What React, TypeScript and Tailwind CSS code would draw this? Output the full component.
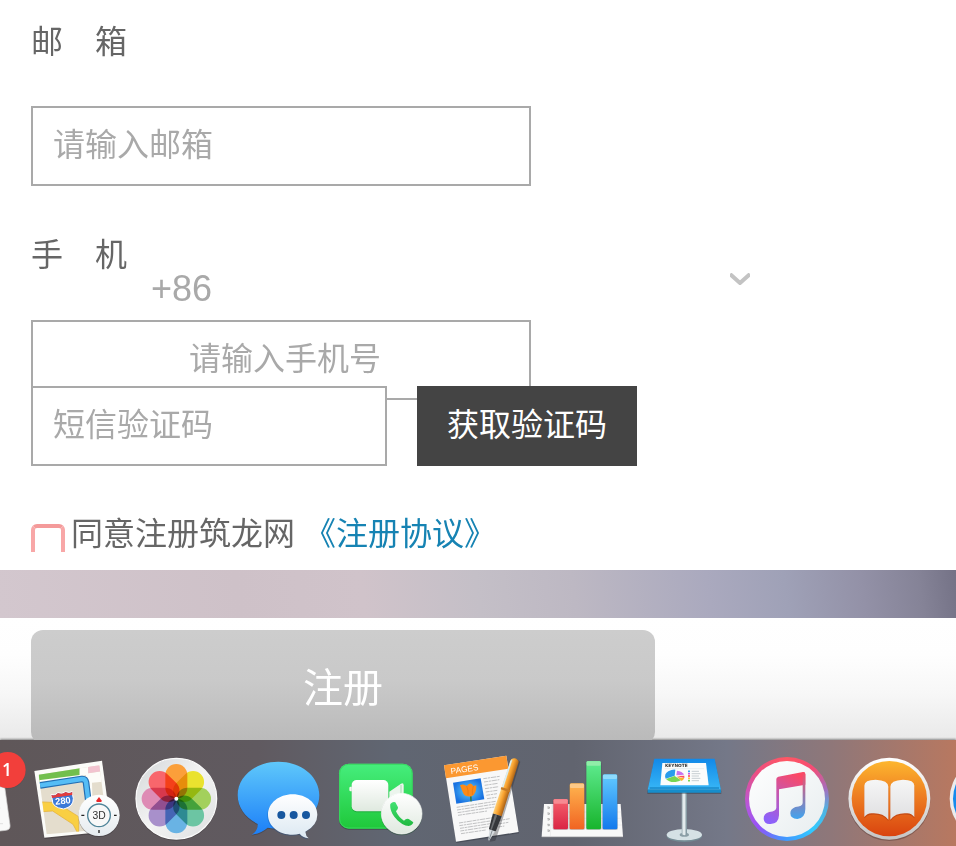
import type { ReactNode } from "react";

type DockIconProps = {
  label: string;
  viewBox: string;
  children: ReactNode;
};

function DockIcon({ label, viewBox, children }: DockIconProps) {
  return (
    <li className="flex justify-start">
      <svg viewBox={viewBox} className="h-[106px] w-[102px] shrink-0 overflow-visible" role="img" aria-label={label}>
        {children}
      </svg>
    </li>
  );
}

type FadeProps = {
  id: string;
  from: string;
  to: string;
};

function VerticalFade({ id, from, to }: FadeProps) {
  return (
    <linearGradient id={id} x1="0" y1="0" x2="0" y2="1">
      <stop offset="0" stopColor={from} />
      <stop offset="1" stopColor={to} />
    </linearGradient>
  );
}

const petals = [
  { angle: 0, color: "#fb9f3a" },
  { angle: 45, color: "#eae22f" },
  { angle: 90, color: "#a3d05c" },
  { angle: 135, color: "#6cc5a3" },
  { angle: 180, color: "#69b3e4" },
  { angle: 225, color: "#a890cb" },
  { angle: 270, color: "#de8bb5" },
  { angle: 315, color: "#f8666c" },
];

const bars = [
  { x: 372, y: 192, color: "url(#bar-red)", cap: "#f78a92" },
  { x: 421, y: 145, color: "url(#bar-orange)", cap: "#fdc987" },
  { x: 471, y: 78, color: "url(#bar-green)", cap: "#91eda9" },
  { x: 520, y: 118, color: "url(#bar-blue)", cap: "#8edbfd" },
];

const legend = ["#3aa3ee", "#c45fe8", "#ff4f67", "#ffc53a", "#75d554"];

function Dock() {
  return (
    <nav
      aria-label="Dock"
      className="overflow-hidden bg-[linear-gradient(90deg,#5f5759_0%,#605a60_27%,#606672_41%,#61646f_60%,#747888_76%,#8f7779_87%,#b87860_100%)] shadow-[0_-1px_2px_#888]"
    >
      <ul className="-ml-[76px] grid w-[1118px] grid-cols-11">
        <DockIcon label="Reminders" viewBox="-225 15 306 318">
          <path d="M-200 100H-2q12 0 13 12L33 270q2 14-12 16L-200 310z" fill="#f9f9f9" stroke="#cfcfcf" strokeWidth="2" />
          <path d="M-10 219h14M-8 266h20" stroke="#d4d4d4" strokeWidth="2" />
          <circle cx="26" cy="107" r="54" fill="#443d3f" opacity=".35" />
          <circle cx="26" cy="105" r="54" fill="#f23f3b" />
          <text x="24" y="123" textAnchor="middle" fontSize="52" fontWeight="600" fill="#fff" className="font-['Open_Sans',sans-serif]">1</text>
        </DockIcon>

        <DockIcon label="Maps" viewBox="80 15 306 318">
          <defs>
            <clipPath id="map-area">
              <path d="M118 119L300 91L325 282L142 298Z" />
            </clipPath>
            <VerticalFade id="compass" from="#ffffff" to="#e6ebef" />
          </defs>
          <path d="M105 109L308 78L337 289L135 309Z" fill="#352f31" opacity=".4" transform="translate(1 3)" />
          <path d="M105 108L308 77L337 288L135 308Z" fill="#fbfbf8" />
          <g clipPath="url(#map-area)">
            <path d="M110 80H330V300H110Z" fill="#e4ddcd" />
            <path d="M110 105L241 90V122L112 142Z" fill="#72bf4d" />
            <path d="M241 90L266 88V115L310 109V140L278 143L282 300L268 300L260 120L118 145V136L241 120Z" fill="#fdfcf8" />
            <path d="M266 80H310V108L267 115Z" fill="#f2c3cf" />
            <path d="M116 200L172 203L238 245V300L221 268L160 228L116 231Z" fill="#f9cf43" stroke="#e4ae31" strokeWidth="2" />
            <path d="M118 152L247 132Q258 131 260 142L268 205" fill="none" stroke="#246fb3" strokeWidth="20" />
            <path d="M118 152L247 132Q258 131 260 142L268 205" fill="none" stroke="#55bdf6" strokeWidth="13" />
          </g>
          <path d="M155 179Q168 183 176 173Q188 179 199 170Q211 176 219 169Q219 181 222 190Q223 215 193 222Q157 217 159 194Z" fill="#3b79d8" stroke="#fff" strokeWidth="3" />
          <path d="M156 180Q168 184 176 174Q188 180 199 171Q211 177 219 170V180L158 189Z" fill="#e33d3d" />
          <text x="191" y="207" textAnchor="middle" fontSize="28" fontWeight="700" fill="#fff" transform="rotate(-6 191 200)" className="font-['Liberation_Sans',sans-serif]">280</text>
          <circle cx="299" cy="244" r="62" fill="#2d282c" opacity=".4" />
          <circle cx="299" cy="241" r="62" fill="url(#compass)" />
          <circle cx="299" cy="241" r="34" fill="#f8f8f8" stroke="#4f8499" strokeWidth="4" />
          <path d="M299 186L308 198L305 201H293L290 198Z" fill="#e9282b" />
          <path d="M246 241h9M344 241h8M299 285v9" stroke="#222" strokeWidth="4" />
          <text x="299" y="252" textAnchor="middle" fontSize="31" fill="#333" className="font-['Liberation_Sans',sans-serif]">3D</text>
        </DockIcon>

        <DockIcon label="Photos" viewBox="385 15 306 318">
          <defs>
            <linearGradient id="photo-disc" x1="0" y1="0" x2="1" y2="1">
              <stop offset="0" stopColor="#d3d6d8" />
              <stop offset=".5" stopColor="#f4f4f4" />
              <stop offset="1" stopColor="#dcdedf" />
            </linearGradient>
          </defs>
          <circle cx="533" cy="194" r="123" fill="#302a2d" opacity=".4" />
          <circle cx="533" cy="191" r="121" fill="url(#photo-disc)" stroke="#fafafa" strokeWidth="4" />
          <g className="isolate">
            {petals.map((petal) => (
              <rect
                key={petal.angle}
                x="500"
                y="87"
                width="66"
                height="104"
                rx="33"
                fill={petal.color}
                transform={`rotate(${petal.angle} 533 191)`}
                className="mix-blend-multiply"
              />
            ))}
          </g>
          <circle cx="533" cy="191" r="6" fill="#fff" />
        </DockIcon>

        <DockIcon label="Messages" viewBox="-1 15 306 318">
          <defs>
            <VerticalFade id="bubble-blue" from="#5fc8fb" to="#1c7ff8" />
            <VerticalFade id="bubble-white" from="#ffffff" to="#dce8f2" />
          </defs>
          <path d="M147 80C215 80 270 124 270 181S215 281 147 281Q130 281 115 278Q94 296 67 299Q86 288 85 267C49 249 25 218 25 181C25 124 79 80 147 80Z" fill="#282a35" opacity=".35" transform="translate(0 3)" />
          <path d="M147 80C215 80 270 124 270 181S215 281 147 281Q130 281 115 278Q94 296 67 299Q86 288 85 267C49 249 25 218 25 181C25 124 79 80 147 80Z" fill="url(#bubble-blue)" />
          <path d="M190 178C231 178 264 205 264 239Q264 271 228 290Q229 303 238 310Q219 307 211 296Q201 299 190 299C149 299 116 273 116 239S149 178 190 178Z" fill="#164e91" opacity=".3" transform="translate(-2 3)" />
          <path d="M190 178C231 178 264 205 264 239Q264 271 228 290Q229 303 238 310Q219 307 211 296Q201 299 190 299C149 299 116 273 116 239S149 178 190 178Z" fill="url(#bubble-white)" />
          <circle cx="156" cy="240" r="12" fill="#17579f" />
          <circle cx="193" cy="240" r="12" fill="#17579f" />
          <circle cx="230" cy="240" r="12" fill="#17579f" />
        </DockIcon>

        <DockIcon label="FaceTime" viewBox="304 15 306 318">
          <defs>
            <VerticalFade id="facetime" from="#46ee7d" to="#1fc83a" />
            <VerticalFade id="camera" from="#ffffff" to="#dfe9df" />
            <VerticalFade id="handset" from="#42e172" to="#20b93f" />
          </defs>
          <rect x="328" y="89" width="221" height="195" rx="29" fill="#223129" opacity=".45" />
          <rect x="328" y="86" width="221" height="195" rx="29" fill="url(#facetime)" />
          <rect x="330" y="88" width="217" height="191" rx="27" fill="none" stroke="#39d85f" strokeWidth="3" />
          <path d="M359 159q0-4 4-4h6v14h-6q-4 0-4-4z" fill="#f1f8f1" />
          <rect x="366" y="137" width="110" height="95" rx="15" fill="#168b2d" opacity=".5" />
          <rect x="366" y="135" width="110" height="94" rx="15" fill="url(#camera)" />
          <path d="M479 170L514 146Q522 142 522 151V215L479 194Z" fill="#ecf5ed" />
          <path d="M514 150V205" stroke="#a8dbb2" strokeWidth="3" />
          <circle cx="516" cy="239" r="62" fill="#1d4b2d" opacity=".5" />
          <circle cx="516" cy="236" r="61" fill="url(#camera)" stroke="#fafafa" strokeWidth="2" />
          <path d="M482 207Q489 199 497 202L505 217Q506 223 499 229Q507 247 523 257Q530 249 537 252L551 262Q548 272 537 273C514 273 477 236 482 207Z" fill="url(#handset)" />
        </DockIcon>

        <DockIcon label="Pages" viewBox="9 15 306 318">
          <defs>
            <linearGradient id="pen" x1="0" y1="0" x2="1" y2="0">
              <stop offset="0" stopColor="#ffd178" />
              <stop offset=".45" stopColor="#f9a22e" />
              <stop offset="1" stopColor="#a65d13" />
            </linearGradient>
            <radialGradient id="poppy-sky">
              <stop offset="0" stopColor="#61cff8" />
              <stop offset="1" stopColor="#1871e1" />
            </radialGradient>
          </defs>
          <path d="M45 92L232 63L269 292L81 321Z" fill="#292d38" opacity=".4" transform="translate(1 3)" />
          <path d="M45 91L232 62L269 291L81 320Z" fill="#f8f8f8" />
          <path d="M45 91L232 62L238 101L51 130Z" fill="#fb9831" />
          <text x="66" y="117" fontSize="25" fill="#fff" transform="rotate(-8 66 117)" className="font-['Liberation_Sans',sans-serif]">PAGES</text>
          <path d="M72 143L155 130L166 193L82 206Z" fill="url(#poppy-sky)" />
          <path d="M123 174Q127 187 126 199" fill="none" stroke="#397229" strokeWidth="4" />
          <path d="M93 151Q103 145 113 153Q125 138 133 153L142 151Q143 177 128 184Q108 187 102 173Z" fill="#fb8b18" />
          <path d="M113 153Q119 166 117 181M133 153Q129 166 130 180" fill="none" stroke="#e5720f" strokeWidth="2" />
          <g stroke="#77787c" strokeWidth="2" strokeDasharray="12 2 7 2 16 2" opacity=".65">
            <path d="M163 131L212 124M165 141L211 134M167 151L207 145M168 161L209 155M170 171L205 166M172 181L204 176M174 191L202 187" />
            <path d="M83 217L200 199M84 225L199 207M86 233L196 216M87 241L174 228" />
            <path d="M90 264L197 247M91 272L190 257M93 280L184 266M94 288L178 275M96 296L170 285" />
            <path d="M208 257L242 251M208 267L238 262M208 276L226 273" />
          </g>
          <path d="M250 67L267 78L215 248L192 315L176 318L180 288Z" fill="#24242a" opacity=".35" transform="translate(7 2)" />
          <g transform="translate(221 190) rotate(18)">
            <path d="M-12-119Q0-133 12-119L14 52H-14Z" fill="url(#pen)" />
            <path d="M-13-115L-8-118V-28H-13Z" fill="#d9edf3" />
            <path d="M-14-31H14V-24H-14Z" fill="#c67b24" />
            <path d="M-14 52H14L11 98L4 108H-4L-11 98Z" fill="#35373b" />
            <path d="M-7 54H0L-2 102H-6Z" fill="#6b6e72" />
            <path d="M-9 101H9L1 133H-2Z" fill="#d7dce0" />
            <path d="M0 103V130" stroke="#6f767e" strokeWidth="2" />
          </g>
        </DockIcon>

        <DockIcon label="Numbers" viewBox="314 15 306 318">
          <defs>
            <VerticalFade id="bar-red" from="#f5616d" to="#da2544" />
            <VerticalFade id="bar-orange" from="#ffb54f" to="#f16422" />
            <VerticalFade id="bar-green" from="#60ec91" to="#18b42c" />
            <VerticalFade id="bar-blue" from="#62cbff" to="#1379ed" />
          </defs>
          <path d="M344 207H574L581 308H337Z" fill="#333640" opacity=".5" />
          <path d="M344 207H574L581 304H337Z" fill="#f8f8f8" />
          <path d="M337 303H581V307H337Z" fill="#d2d2d4" />
          <path d="M368 208L363 303M369 231H576M367 250H577M366 270H578" stroke="#d9d9d9" strokeWidth="1" />
          {[218, 236, 253, 270, 287].map((y) => (
            <path key={y} d={`M354 ${y - 2}h6v4h-5`} fill="none" stroke="#8a8a8a" strokeWidth="2" />
          ))}
          {bars.map((bar) => (
            <g key={bar.x}>
              <rect x={bar.x - 2} y={bar.y + 3} width="48" height={282 - bar.y} rx="5" fill="#30343b" opacity=".25" />
              <rect x={bar.x} y={bar.y} width="44" height={283 - bar.y} rx="5" fill={bar.color} />
              <rect x={bar.x + 1} y={bar.y + 1} width="42" height="13" rx="3" fill={bar.cap} />
            </g>
          ))}
        </DockIcon>

        <DockIcon label="Keynote" viewBox="17 15 306 318">
          <defs>
            <VerticalFade id="lectern" from="#1289e8" to="#37b6f6" />
            <linearGradient id="stand" x1="0" y1="0" x2="1" y2="0">
              <stop offset="0" stopColor="#9eafb6" />
              <stop offset=".45" stopColor="#f7fcfd" />
              <stop offset="1" stopColor="#708791" />
            </linearGradient>
          </defs>
          <ellipse cx="165" cy="303" rx="53" ry="18" fill="#748b94" />
          <ellipse cx="165" cy="299" rx="53" ry="17" fill="#d5e1e5" />
          <ellipse cx="165" cy="299" rx="14" ry="6" fill="#8b9ea6" />
          <path d="M157 168H173V298Q165 303 157 298Z" fill="url(#stand)" />
          <path d="M75 71H256L276 166V174H54V166Z" fill="#25323e" opacity=".4" transform="translate(0 3)" />
          <path d="M75 71H256L275 164H55Z" fill="url(#lectern)" />
          <path d="M55 164H275V173H55Z" fill="#168dcb" />
          <path d="M61 159H269" stroke="#0c75b3" strokeWidth="3" />
          <path d="M99 84H230L238 151H93Z" fill="#fbfcfc" />
          <text x="107" y="97" fontSize="13" fontWeight="700" fill="#333" className="font-['DejaVu_Sans',sans-serif]">KEYNOTE</text>
          <path d="M106 101H224" stroke="#c9d0d3" strokeWidth="1" />
          <path d="M136 122L109 131Q103 118 117 109Q128 103 138 104Z" fill="#299cec" />
          <path d="M136 123L110 132Q120 143 139 141Q148 140 155 136Z" fill="#78d553" />
          <path d="M141 121L143 107Q159 109 164 119Z" fill="#c872ef" />
          <path d="M142 123L165 122V129Z" fill="#ff4e61" />
          <path d="M142 125L165 130Q162 135 157 138Z" fill="#f8b52c" />
          {legend.map((color, i) => (
            <g key={color}>
              <path d={`M176 ${109 + i * 7}h6`} stroke={color} strokeWidth="5" />
              <path d={`M187 ${109 + i * 7}h${i % 2 ? 26 : 22}`} stroke="#aeb7bc" strokeWidth="2" />
            </g>
          ))}
        </DockIcon>

        <DockIcon label="iTunes" viewBox="322 15 306 318">
          <defs>
            <VerticalFade id="note-right" from="#f94a65" to="#3fa4ef" />
            <linearGradient id="note-left" x1="0.7" y1="0" x2="0.3" y2="1">
              <stop offset="0" stopColor="#fc4864" />
              <stop offset=".55" stopColor="#bd58bb" />
              <stop offset="1" stopColor="#8c61fa" />
            </linearGradient>
            <linearGradient id="itunes-disc" x1="0" y1="0" x2="1" y2="1">
              <stop offset="0" stopColor="#ffffff" />
              <stop offset="1" stopColor="#e7edef" />
            </linearGradient>
          </defs>
          <foreignObject x="346" y="66" width="252" height="252">
            <div className="size-full rounded-full bg-[conic-gradient(#ff5763,#f54c75_40deg,#a56ebd_75deg,#50b3e2_105deg,#31caff_140deg,#4295ff_185deg,#9453f7_225deg,#b657dc_260deg,#ed4f83_310deg,#ff5763)]" />
          </foreignObject>
          <circle cx="472" cy="192" r="114" fill="url(#itunes-disc)" />
          <path d="M440 132Q440 127 446 125L520 111Q527 110 527 118V149L448 163V241Q447 266 423 267Q404 269 402 252Q401 236 419 231Q440 228 440 218Z" fill="url(#note-left)" />
          <path d="M519 112Q527 110 527 118V222Q527 249 503 252Q482 251 482 235Q482 222 497 216Q519 214 519 204Z" fill="url(#note-right)" />
        </DockIcon>

        <DockIcon label="iBooks" viewBox="116 15 306 318">
          <defs>
            <VerticalFade id="ibooks-edge" from="#ffffff" to="#c5c4c4" />
            <linearGradient id="ibooks" x1="0" y1="0" x2="0" y2="1">
              <stop offset="0" stopColor="#fdb62f" />
              <stop offset=".45" stopColor="#ee7f22" />
              <stop offset="1" stopColor="#d9430f" />
            </linearGradient>
            <VerticalFade id="book" from="#f6f6f6" to="#dfdfe1" />
          </defs>
          <circle cx="267" cy="195" r="123" fill="#48302a" opacity=".4" />
          <circle cx="267" cy="191" r="123" fill="url(#ibooks-edge)" />
          <circle cx="267" cy="191" r="113" fill="url(#ibooks)" />
          <path d="M192 152Q192 134 226 134Q264 136 264 155V254Q247 232 213 235Q200 236 192 246Z" fill="#a83410" opacity=".5" transform="translate(0 4)" />
          <path d="M342 152Q342 134 308 134Q270 136 270 155V254Q287 232 321 235Q334 236 342 246Z" fill="#a83410" opacity=".5" transform="translate(0 4)" />
          <path d="M192 152Q192 134 226 134Q264 136 264 155V254Q247 232 213 235Q200 236 192 246Z" fill="url(#book)" />
          <path d="M342 152Q342 134 308 134Q270 136 270 155V254Q287 232 321 235Q334 236 342 246Z" fill="url(#book)" />
        </DockIcon>

        <DockIcon label="App Store" viewBox="421 15 306 318">
          <circle cx="573" cy="191" r="123" fill="#ececec" />
          <circle cx="573" cy="191" r="113" fill="#168bed" />
        </DockIcon>
      </ul>
    </nav>
  );
}

const fieldClass =
  "block rounded-none border-2 border-[#a9a9a9] bg-white pb-0.5 text-[32px] text-[#666] placeholder:text-[#a9a9a9] placeholder:opacity-100 outline-none";

export default function App() {
  return (
    <div className="overflow-hidden bg-white font-['Liberation_Sans','Noto_Sans_CJK_SC',sans-serif] text-[32px] leading-9 text-[#666]">
      <form onSubmit={(event) => event.preventDefault()}>
        <div className="px-[31px] pt-6 pb-[18px]">
          <label htmlFor="email" className="block">邮　箱</label>
          <input id="email" type="email" placeholder="请输入邮箱" className={`${fieldClass} mt-[46px] h-20 w-full max-w-[500px] px-5`} />

          <label htmlFor="phone" className="mt-[51px] block">手　机</label>
          <div className="mb-[15px] ml-[120px] flex max-w-[599px] items-start">
            <select aria-label="国家区号" className="h-8 flex-1 appearance-none bg-transparent p-0 text-4xl leading-8 text-[#a9a9a9] outline-none">
              <option>+86</option>
            </select>
            <svg viewBox="0 0 20 12" className="h-3 w-5" aria-hidden="true">
              <path d="M0 1L10 10L20 1" fill="none" stroke="#c3c3c3" strokeWidth="4" />
            </svg>
          </div>
          <input id="phone" type="tel" placeholder="请输入手机号" className={`${fieldClass} h-20 w-full max-w-[500px] pr-5 pl-[156px]`} />

          <div className="relative -mt-[14px] flex gap-[30px]">
            <input aria-label="短信验证码" placeholder="短信验证码" className={`${fieldClass} h-20 w-[356px] px-5`} />
            <button type="button" className="h-20 bg-[#444] px-[30px] pb-0.5 text-white">获取验证码</button>
          </div>

          <div className="mt-[50px] flex items-end">
            <input
              id="agree"
              type="checkbox"
              className="mr-[6px] h-7 w-[34px] appearance-none rounded-t-md border-4 border-b-0 border-[#f8a7a7] border-t-[#f49a9a]"
            />
            <label htmlFor="agree">同意注册筑龙网</label>
            <a href="#agreement" className="ml-[9px] text-[#1683b3]">《注册协议》</a>
          </div>
        </div>

        <div className="h-12 bg-[linear-gradient(82deg,#d3c7ce_0%,#cec1c8_25%,#d0c3ca_38%,#c4bfc7_50%,#bdb8c3_60%,#aaa9be_74%,#9fa1b7_82%,#9391a7_90%,#858397_96%,#747286_100%)]" />

        <div className="h-[122px] overflow-hidden bg-[linear-gradient(180deg,#fff_0%,#fefefe_30%,#f7f7f7_62%,#e9e9e9_100%)] px-[31px] pt-3">
          <button
            type="submit"
            className="h-[114px] w-full max-w-[624px] rounded-xl bg-[linear-gradient(180deg,#cdcdcd_0%,#c9c9c9_45%,#b9b9b9_100%)] pt-0.5 text-[40px] text-white"
          >
            注册
          </button>
        </div>
      </form>
      <Dock />
    </div>
  );
}
